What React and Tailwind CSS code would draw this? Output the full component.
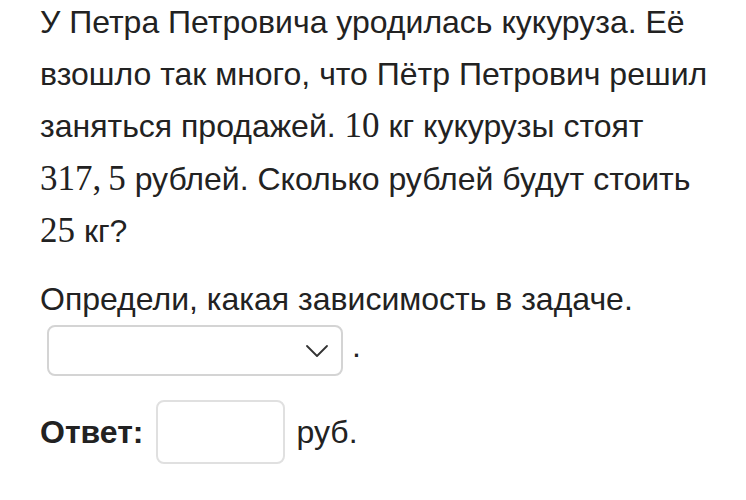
import { ChevronDown } from 'lucide-react';

const sans = "font-['Liberation_Sans',Arial,sans-serif]";
const M = ({ children }) => (
  <span className="font-['Liberation_Serif','DejaVu_Serif',serif] text-[35px] whitespace-nowrap">{children}</span>
);

export default function App() {
  return (
    <div className={`w-[746px] h-[500px] bg-white text-[#222] ${sans} text-[32px] pl-10 pr-[26px] overflow-hidden`}>
      <p className="leading-[51.5px] -mt-[3px]">
        У Петра Петровича уродилась кукуруза. Её взошло так много, что Пётр Петрович решил
        заняться продажей. <M>10</M> кг кукурузы стоят <M>317,&thinsp;5</M> рублей. Сколько рублей
        будут стоить <M>25</M> кг?
      </p>

      <p className="mt-[16px] leading-[51.5px]">Определи, какая зависимость в задаче.</p>

      <div className="flex items-end gap-[9px] ml-[7px]">
        <div className="w-[296px] h-[51px] border-2 border-[#d4d4d4] rounded-[8px] flex items-center justify-end pr-[4px]">
          <ChevronDown size={40} strokeWidth={1.1} className="text-[#333]" />
        </div>
        <span className="leading-none mb-[14px]">.</span>
      </div>

      <div className="flex items-center mt-[24px]">
        <span className="font-bold">Ответ:</span>
        <div className="w-[129px] h-[64px] ml-[12px] border-2 border-[#e0e0e0] rounded-[8px]" />
        <span className="ml-[12px]">руб.</span>
      </div>
    </div>
  );
}
